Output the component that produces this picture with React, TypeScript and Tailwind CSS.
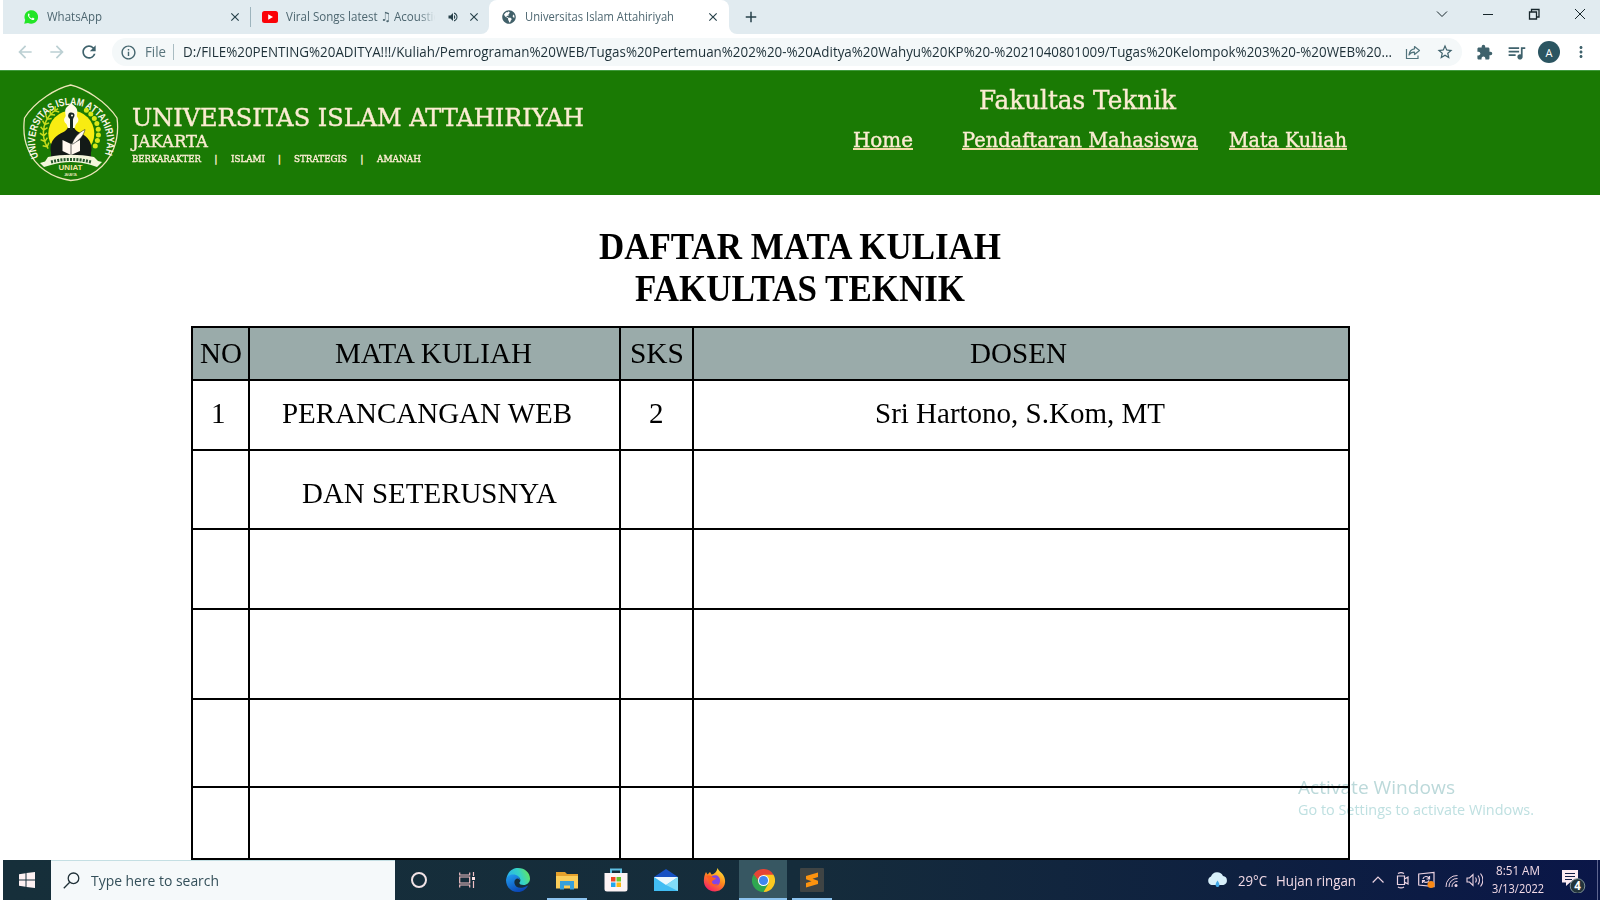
import { useLayoutEffect, useRef, useState, type ReactNode } from "react";
import { FaGlobeAmericas } from "react-icons/fa";
import {
  MdArrowBack,
  MdArrowForward,
  MdRefresh,
  MdInfoOutline,
  MdStarBorder,
  MdExtension,
  MdQueueMusic,
  MdMoreVert,
  MdVolumeUp,
  MdClose,
  MdAdd,
} from "react-icons/md";

/** One line of text squeezed or stretched to a given width. */
function Fit({ w, className = "", children }: { w: number; className?: string; children: ReactNode }) {
  const ref = useRef<HTMLSpanElement>(null);
  const [scale, setScale] = useState(1);
  useLayoutEffect(() => {
    const el = ref.current;
    if (el && el.offsetWidth) {
      const range = document.createRange();
      range.selectNodeContents(el);
      el.style.transform = "none";
      const natural = range.getBoundingClientRect().width;
      el.style.transform = `scaleX(${w / natural})`;
      setScale(w / natural);
    }
  }, [w]);
  return (
    <span className={`block shrink-0 whitespace-nowrap ${className}`} style={{ width: w }}>
      <span ref={ref} className="inline-block origin-left align-top" style={{ transform: `scaleX(${scale})` }}>
        {children}
      </span>
    </span>
  );
}

function TabBar() {
  return (
    <div className="ml-[3px] flex h-[34px] items-center bg-[#e1ebf0] text-[12.5px] leading-[34px] text-[#4d6670]">
      <svg className="ml-[21px] size-[14px] shrink-0" viewBox="0 0 14 14">
        <path d="M0.2 13.8 1.2 10A6.8 6.8 0 1 1 4 12.9z" fill="#22e526" />
        <path d="M4.6 3.6c-.8.5-.9 1.6-.3 2.8a8 8 0 0 0 3.5 3.4c1.100.5 2.200.3 2.500-.6l.1-.8-1.700-.8-.8.9c-1.400-.6-2.300-1.500-2.900-2.800l.7-.8-.6-1.500z" fill="#fff" />
      </svg>
      <Fit w={55} className="ml-[9px]">WhatsApp</Fit>
      <MdClose className="ml-[126px] size-[14px] shrink-0 text-[#27414a]" />
      <div className="ml-[8px] h-[20px] w-px shrink-0 bg-[#9db4bd]" />
      <svg className="ml-[11px] h-[12px] w-[16px] shrink-0" viewBox="0 0 16 12">
        <rect width="16" height="12" rx="2.500" fill="#fb0207" />
        <path d="M6.200 3.200v5.600l4.800-2.800z" fill="#fff" />
      </svg>
      <div className="ml-[8px] w-[154px] shrink-0 [mask-image:linear-gradient(to_right,black_86%,transparent_97%)]">
        <Fit w={153}>Viral Songs latest ♫ Acoustic</Fit>
      </div>
      <MdVolumeUp className="ml-[7px] size-[12px] shrink-0 text-[#27414a]" />
      <MdClose className="ml-[8px] size-[14px] shrink-0 text-[#27414a]" />
      <div className="h-[34px] w-[8px] shrink-0 bg-white">
        <div className="h-full w-[8px] rounded-br-[8px] bg-[#e1ebf0]" />
      </div>
      <div className="h-[34px] w-[240px] shrink-0 bg-[#e1ebf0]">
        <div className="flex h-full w-full items-center rounded-t-[8px] bg-white">
          <FaGlobeAmericas className="ml-[13px] size-[14px] shrink-0 text-[#416069]" />
          <Fit w={149} className="ml-[9px]">Universitas Islam Attahiriyah</Fit>
          <MdClose className="ml-[32px] size-[14px] shrink-0 text-[#27414a]" />
        </div>
      </div>
      <div className="h-[34px] w-[8px] shrink-0 bg-white">
        <div className="h-full w-[8px] rounded-bl-[8px] bg-[#e1ebf0]" />
      </div>
      <MdAdd className="ml-[5px] size-[18px] shrink-0 text-[#27414a]" />
      <svg className="ml-auto mr-[15px] h-[14px] w-[149px] shrink-0 -translate-y-[3px]" viewBox="0 0 149 14" fill="none" stroke="#17262b">
        <path d="M1 4.500 6 9.500 11 4.500" />
        <path d="M47 7.500h10" />
        <path d="M93.500 5h7v7h-7zM95.500 5V2.500h7.500V10h-2.500" strokeWidth="1.300" />
        <path d="M139 2l10 10M149 2l-10 10" />
      </svg>
    </div>
  );
}

function AddressBar() {
  return (
    <div className="flex h-[36px] items-center bg-white text-[14px] leading-[34px]">
      <MdArrowBack className="ml-[15px] size-[20px] shrink-0 text-[#bcd0d3]" />
      <MdArrowForward className="ml-[12px] size-[20px] shrink-0 text-[#bcd0d3]" />
      <MdRefresh className="ml-[12px] size-[20px] shrink-0 text-[#3f626c]" />
      <div className="ml-[13px] flex h-[28px] w-[1350px] shrink-0 items-center rounded-full bg-[#f4f8f9]">
        <MdInfoOutline className="ml-[8px] size-[17px] shrink-0 text-[#45666f]" />
        <Fit w={21} className="ml-[8px] text-[#58747c]">File</Fit>
        <div className="ml-[7px] h-[16px] w-px bg-[#a9bcc2]" />
        <Fit w={1209} className="ml-[9px] text-[#1d3038]">
          D:/FILE%20PENTING%20ADITYA!!!/Kuliah/Pemrograman%20WEB/Tugas%20Pertemuan%202%20-%20Aditya%20Wahyu%20KP%20-%2021040801009/Tugas%20Kelompok%203%20-%20WEB%20...
        </Fit>
        <svg className="ml-[13px] size-[16px] shrink-0" viewBox="0 0 16 16" fill="none" stroke="#52747c" strokeWidth="1.200">
          <path d="M1.500 5v9.500h11.500v-3" />
          <path d="M9.500 2.500 14.500 6.500 9.500 10.500V8.200C7 8 5.200 9 4 11 4.300 7.500 6.200 5.200 9.500 4.800z" strokeLinejoin="round" />
        </svg>
        <MdStarBorder className="ml-[15px] size-[18px] shrink-0 text-[#3f626c]" />
      </div>
      <MdExtension className="ml-[14px] size-[17px] shrink-0 text-[#3f626c]" />
      <MdQueueMusic className="ml-[13px] size-[21px] shrink-0 text-[#3f626c]" />
      <div className="ml-[11px] flex size-[22px] shrink-0 items-center justify-center rounded-full bg-[#2b5561] text-[11px] leading-none text-white">A</div>
      <MdMoreVert className="ml-[12px] size-[18px] shrink-0 text-[#3f626c]" />
    </div>
  );
}

function Crest() {
  const leaves = [0, 1, 2, 3, 4, 5, 6, 7];
  return (
    <svg className="h-[98px] w-[96px] shrink-0" viewBox="0 0 96 98">
      <defs>
        <path id="crest-arc" d="M16 74A36 36.500 0 1 1 81 72" />
      </defs>
      <path
        d="M47.700 1C34 4 12 17 1.500 34 0 46 1 56 5 65c7 18 24 29 42.700 31.500C67 95 83 83 90.500 65c4-10 5-20 3.500-31C83 17 61 4 47.700 1z"
        fill="none"
        stroke="#ece6b8"
        strokeWidth="1.300"
      />
      <text fontSize="10.500" fontWeight="700" fill="#fbf6e4" className="font-['Liberation_Sans',sans-serif]">
        <textPath href="#crest-arc" startOffset="1" textLength="143" lengthAdjust="spacingAndGlyphs">
          UNIVERSITAS ISLAM ATTAHIRIYAH
        </textPath>
      </text>
      {leaves.map((i) => {
        const deg = 152 + i * 12;
        const a = (deg * Math.PI) / 180;
        return (
          <g
            key={i}
            transform={`translate(${48 + 27.500 * Math.cos(a)} ${49 + 27.500 * Math.sin(a)}) rotate(${deg + 90})`}
            stroke="#c9dc1c"
            strokeWidth="1.500"
            fill="none"
          >
            <path d="M-3 0h6M-1 0l3-3.500M-1 0l3 3.500" />
          </g>
        );
      })}
      {leaves.map((i) => {
        const a = ((28 - i * 12) * Math.PI) / 180;
        return <circle key={i} cx={48 + 27.500 * Math.cos(a)} cy={49 + 27.500 * Math.sin(a)} r="2.500" fill="#d9e817" />;
      })}
      <circle cx="48.300" cy="49.500" r="23" fill="#f8ec12" />
      <path d="M26.500 75c2-3 2-5 1-9-.5-10 6-15 13-18 4-2 5-5 5.500-10h4c.5 5 1.500 8 5.500 10 7 3 13.500 8 13 18-1 4-1 6 1 9z" fill="#131a17" />
      <path d="M48.300 18.500c1.500 3.500 6.500 4 6 9.500 0 2.500-1 3.500 0 5 2 2.500 1 5-.8 6.500-1.500 1.500-1 3-2 4.500h-6.500c-1-1.500-.5-3-2-4.500-1.800-1.500-2.800-4-.8-6.500 1-1.500 0-2.500 0-5-.5-5.500 4.600-6 6.100-9.500z" fill="#fffbe9" />
      <path d="M45.500 30c1-2 5.500-2 6 .8.300 2.200-1.500 3-1.500 5V46h-3V35c-1.500-1-2.500-3-1.500-5z" fill="#172522" />
      <circle cx="49" cy="31.500" r="1" fill="#fffbe9" />
      <path d="M39.500 56l8.500 4 9-4v11l-9 4-8.500-4z" fill="#fff8ef" />
      <path d="M48 60v11" stroke="#333" strokeWidth=".8" />
      <path d="M49 60c2-6 6-11 13-14.500-1 6-6 11-12 14.500z" fill="#fff8ef" stroke="#131a17" strokeWidth=".5" />
      <path d="M17 79l5-1.500L25 73c15-3 31-3 46 0l4 4 4 1-5 5-6-2c-13-4-27-4-40 0l-7 2z" fill="#f4f6dc" />
      <path d="M28 78c13-3.500 27-3.500 40 0" stroke="#24552b" strokeWidth="3" strokeDasharray="2 1.200" fill="none" />
      <text x="35.500" y="86" fontSize="8" textLength="24" fontWeight="700" fill="#f6e6a4" className="font-['Liberation_Sans',sans-serif]">UNIAT</text>
      <text x="41" y="92" fontSize="3.600" textLength="13" fill="#f6eccb" className="font-['Liberation_Sans',sans-serif]">JAKARTA</text>
    </svg>
  );
}

function SiteHeader() {
  return (
    <header className="flex h-[125px] border-t border-[#3f9a3d] bg-[#1a7a04] font-['DejaVu_Serif',serif] text-[#fbecd2] [-webkit-text-stroke:0.4px_#fbecd2]">
      <div className="ml-[23px] mt-[13px] [-webkit-text-stroke:0]">
        <Crest />
      </div>
      <div className="ml-[13px] w-[721px] shrink-0 pt-[32px]">
        <Fit w={452} className="text-[25px] leading-[30px]">UNIVERSITAS ISLAM ATTAHIRIYAH</Fit>
        <Fit w={76} className="text-[16.500px] leading-[18px]">JAKARTA</Fit>
        <div className="flex text-[9.700px] leading-[16px]">
          <Fit w={69}>BERKARAKTER</Fit>
          <span className="w-[30px] text-center">|</span>
          <Fit w={34}>ISLAMI</Fit>
          <span className="w-[29px] text-center">|</span>
          <Fit w={53}>STRATEGIS</Fit>
          <span className="w-[30px] text-center">|</span>
          <Fit w={44}>AMANAH</Fit>
        </div>
      </div>
      <div className="shrink-0 pt-[13px]">
        <Fit w={197} className="ml-[126px] text-[25.500px] leading-[32px]">Fakultas Teknik</Fit>
        <nav className="flex pt-[11px] text-[20px] leading-[26px]">
          <a>
            <Fit w={60} className="h-[23px] border-b-2 border-[#f3dca8]">Home</Fit>
          </a>
          <a className="ml-[49px]">
            <Fit w={236} className="h-[23px] border-b-2 border-[#f3dca8]">Pendaftaran Mahasiswa</Fit>
          </a>
          <a className="ml-[31px]">
            <Fit w={118} className="h-[23px] border-b-2 border-[#f3dca8]">Mata Kuliah</Fit>
          </a>
        </nav>
      </div>
    </header>
  );
}

function Course() {
  const cell = "flex items-center border-b-2 border-r-2 border-black";
  return (
    <main className="relative h-[665px] bg-white font-['Liberation_Serif',serif] text-black">
      <div className="absolute left-[1298px] top-[579px] font-['Open_Sans',sans-serif] text-[#bcd9da]">
        <Fit w={157} className="text-[19px] leading-[26px]">Activate Windows</Fit>
        <Fit w={236} className="text-[14.500px] leading-[20px] text-[#bfe0e1]">Go to Settings to activate Windows.</Fit>
      </div>
      <h1 className="pt-[31px] text-[37px] font-bold leading-[42px]">
        <Fit w={402} className="ml-[599px]">DAFTAR MATA KULIAH</Fit>
        <Fit w={330} className="ml-[635px]">FAKULTAS TEKNIK</Fit>
      </h1>
      <div className="relative ml-[191px] mt-[16px] grid w-[1159px] grid-cols-[57px_371px_73px_656px] grid-rows-[53px_70px_79px_80px_90px_88px_72px] border-l-2 border-t-2 border-black text-[29.500px] leading-[32px]">
        <div className={`${cell} bg-[#9aabaa] pb-[1px]`}><Fit w={42} className="ml-[7px]">NO</Fit></div>
        <div className={`${cell} bg-[#9aabaa] pb-[1px]`}><Fit w={197} className="ml-[85px]">MATA KULIAH</Fit></div>
        <div className={`${cell} bg-[#9aabaa] pb-[1px]`}><Fit w={54} className="ml-[9px]">SKS</Fit></div>
        <div className={`${cell} bg-[#9aabaa] pb-[1px]`}><Fit w={97} className="ml-[276px]">DOSEN</Fit></div>
        <div className={`${cell} pb-[4px]`}><Fit w={14.500} className="ml-[18px]">1</Fit></div>
        <div className={`${cell} pb-[4px]`}><Fit w={290} className="ml-[32px]">PERANCANGAN WEB</Fit></div>
        <div className={`${cell} pb-[4px]`}><Fit w={14.500} className="ml-[28px]">2</Fit></div>
        <div className={`${cell} pb-[4px]`}><Fit w={290} className="ml-[181px]">Sri Hartono, S.Kom, MT</Fit></div>
        <div className={cell} />
        <div className={`${cell} pt-[7px]`}><Fit w={255} className="ml-[52px]">DAN SETERUSNYA</Fit></div>
        {Array.from({ length: 18 }, (_, i) => (
          <div key={i} className={cell} />
        ))}
      </div>
    </main>
  );
}

function EdgeIcon() {
  return (
    <svg className="size-[24px]" viewBox="0 0 24 24">
      <defs>
        <linearGradient id="edge-a" x1="0" y1="0.300" x2="1" y2="0">
          <stop offset="0" stopColor="#2ab4ea" />
          <stop offset=".5" stopColor="#35d2c6" />
          <stop offset="1" stopColor="#70ea45" />
        </linearGradient>
        <linearGradient id="edge-b" x1="0" y1="0" x2="0.600" y2="1">
          <stop offset="0" stopColor="#22a2f2" />
          <stop offset="1" stopColor="#0a45b5" />
        </linearGradient>
      </defs>
      <path d="M.5 10C2 3 7 0 12 0c7 0 12 5 12 10.500 0 4-3 6.500-6.500 6.500-3 0-4.500-1-4-2.500 1.500-2 1-4-1-5.500C9 7 3.500 7.500.5 10z" fill="url(#edge-a)" />
      <path d="M0 12c0-3 3-5.500 7-5.500 4.500 0 7 2.500 7 5.500l-2-1.500c-3 0-4 2.500-3.500 5C9.500 20 15 21.500 22 17.500 20 21.500 16.500 24 12 24 5 24 0 19 0 12z" fill="url(#edge-b)" />
    </svg>
  );
}

function ExplorerIcon() {
  return (
    <svg className="h-[19px] w-[22px]" viewBox="0 0 22 19">
      <path d="M0 1h9l2 2h11v14H0z" fill="#e5a12c" />
      <path d="M0 5h22v12.500H0z" fill="#fbce5a" />
      <path d="M4 18.500V10h14v8.500h-4v-4H8v4z" fill="#35a0dc" />
    </svg>
  );
}

function StoreIcon() {
  return (
    <svg className="h-[24px] w-[24px]" viewBox="0 0 24 24">
      <path d="M7 6V1.500h10V6" fill="none" stroke="#5fbfe2" strokeWidth="2" />
      <path d="M.5 5h23v16a2.500 2.500 0 0 1-2.500 2.500H3A2.500 2.500 0 0 1 .5 21z" fill="#fdf4f5" />
      <path d="M7 9h4.500v4.500H7z" fill="#ee4623" />
      <path d="M12.500 9H17v4.500h-4.500z" fill="#6bc72a" />
      <path d="M7 14.500h4.500V19H7z" fill="#22a7ec" />
      <path d="M12.500 14.500H17V19h-4.500z" fill="#fcb813" />
    </svg>
  );
}

function MailIcon() {
  return (
    <svg className="h-[23px] w-[24px]" viewBox="0 0 24 23">
      <path d="M0 8 12 0l12 8v4H0z" fill="#1551c3" />
      <path d="M0 8h24v14H0z" fill="#41bdf3" />
      <path d="M0 8h24L12 16z" fill="#ecf8fd" />
      <path d="M24 8v14L12 16z" fill="#82dcf8" />
    </svg>
  );
}

function FirefoxIcon() {
  return (
    <svg className="size-[24px]" viewBox="0 0 24 24">
      <defs>
        <linearGradient id="fox" x1="0.800" y1="0" x2="0.200" y2="1">
          <stop offset="0" stopColor="#ffe93b" />
          <stop offset=".45" stopColor="#ff8a1c" />
          <stop offset="1" stopColor="#f5156c" />
        </linearGradient>
      </defs>
      <path d="M14.500 0c1 3 3 3.500 5 6 5 6 3 17-7.500 17.500C4 23.500 0 17 1 11c0-3 1-5 2-7l1.500 2.500L7 4l1.500 2.500C12 6 14 3 14.500 0z" fill="url(#fox)" />
      <path d="M9 8c4-2 8 0 8 4.500S14 18 11.500 17.500 7 15 7.500 12.500l3-1L7.500 10z" fill="#8145e6" />
      <path d="M3 8c3-1 5-.5 7 1.500l3 .5c-.5 2-4 2-4 4 0 3 5 2.500 6 1.500-2 4-8 3-9-1C5.500 12 5 10 3 8z" fill="#ff5d22" />
    </svg>
  );
}

function ChromeIcon() {
  return (
    <svg className="size-[23px]" viewBox="0 0 48 48">
      <path d="M24 24 3.200 12A24 24 0 0 1 44.800 12z" fill="#e64435" />
      <path d="M24 24 44.800 12A24 24 0 0 1 24 48z" fill="#fbc820" />
      <path d="M24 24V48A24 24 0 0 1 3.200 12z" fill="#2ea750" />
      <path d="M24 12h20.800L34 28z" fill="#fbc820" />
      <path d="M34.400 30 24 48l-10-18z" fill="#2ea750" />
      <path d="M13.600 30 3.200 12 24 12z" fill="#e64435" />
      <path d="M13.600 30 3.200 12l.8-1 14 20z" fill="#2ea750" />
      <circle cx="24" cy="24" r="11.500" fill="#fff" />
      <circle cx="24" cy="24" r="9.500" fill="#3f86f0" />
    </svg>
  );
}

function SublimeIcon() {
  return (
    <svg className="size-[24px]" viewBox="0 0 24 24">
      <rect width="24" height="24" rx="1" fill="#3f4444" />
      <path d="M6 8 18 4.500V9l-5.500 1.700 5.500 2V16L6 19.500V15l5.500-1.700-5.500-2z" fill="#fd930f" />
    </svg>
  );
}

function Taskbar() {
  const slot = "flex h-full w-[48px] shrink-0 flex-col items-center";
  return (
    <footer className="ml-[3px] flex h-[40px] items-center bg-[linear-gradient(to_right,#162f3a_0%,#152c3b_50%,#0e2040_78%,#0a1648_100%)] text-[14px] leading-[40px] text-[#f3dbe7]">
      <div className="flex h-full w-[48px] shrink-0 items-center justify-center">
        <svg className="size-[16px]" viewBox="0 0 16 16" fill="#fdf1f2">
          <path d="M0 2.200 6.500 1.300v6.200H0zM7.500 1.100 16 0v7.500H7.500zM0 8.500h6.500v6.200L0 13.800zM7.500 8.500H16V16l-8.500-1.100z" />
        </svg>
      </div>
      <div className="flex h-full w-[344px] shrink-0 items-center border-t border-[#c4dfe3] bg-[#f5f9fa]">
        <svg className="ml-[12px] size-[17px]" viewBox="0 0 17 17" fill="none" stroke="#1f3037" strokeWidth="1.300">
          <circle cx="10.500" cy="6.300" r="5.300" />
          <path d="M6.700 10.200.8 16.200" />
        </svg>
        <Fit w={128} className="ml-[11px] text-[14.500px] text-[#34505a]">Type here to search</Fit>
      </div>
      <div className="ml-[16px] size-[16px] shrink-0 rounded-full border-2 border-[#f2e3e6]" />
      <svg className="ml-[32px] size-[16px] shrink-0" viewBox="0 0 16 16" fill="none" stroke="#f0bfc4" strokeWidth="1.200">
        <path d="M.7.5v2.500h10V.5M.7 15.500V13h10v2.500M.7 5h10v6H.7zM14.500 0v4M14.500 9v7" />
        <path d="M13 5h3v3h-3z" fill="#fbe0e3" stroke="none" />
      </svg>
      <div className="ml-[19px] flex h-full shrink-0">
        <div className={`${slot} justify-center`}><EdgeIcon /></div>
        <div className={`${slot} ml-[1px] justify-between pt-[11px]`}>
          <ExplorerIcon />
          <div className="h-[2px] w-[40px] bg-[#8cc3ef]" />
        </div>
        <div className={`${slot} ml-[1px] justify-center`}><StoreIcon /></div>
        <div className={`${slot} ml-[2px] justify-center`}><MailIcon /></div>
        <div className={`${slot} ml-[1px] justify-center`}><FirefoxIcon /></div>
        <div className={`${slot} justify-between bg-[#375762] pt-[9px]`}>
          <ChromeIcon />
          <div className="h-[2px] w-[48px] bg-[#8cc3ef]" />
        </div>
        <div className={`${slot} ml-[1px] justify-between pt-[8px]`}>
          <SublimeIcon />
          <div className="h-[2px] w-[40px] bg-[#8cc3ef]" />
        </div>
      </div>
      <svg className="ml-[371px] h-[16px] w-[21px] shrink-0" viewBox="0 0 21 16">
        <path d="M4.500 13A4.500 4.500 0 0 1 4 4.500 6.500 6.500 0 0 1 16 4a4.600 4.600 0 0 1 .5 9z" fill="#d8f0fa" />
        <path d="M10.500 8.500c-3 4-2 6.500 0 6.500s3-2.500 0-6.500z" fill="#41a8e8" />
      </svg>
      <Fit w={29} className="ml-[10px] h-[39px]">29°C</Fit>
      <Fit w={80} className="ml-[9px] h-[39px]">Hujan ringan</Fit>
      <svg className="ml-[16px] h-[20px] w-[111px] shrink-0" viewBox="0 0 111 20" fill="none" stroke="#ecd3e2" strokeWidth="1.200">
        <path d="M.7 12.500 6 7l5.500 5.500" />
        <path d="M25.500 6h7v8.500h-7zM32.500 9l3.500-2v7l-3.500-2M26 3.500c2-1.300 4-1.300 6 0M26 17c2 1.300 4 1.300 6 0" />
        <path d="M46.700 4 62 2.500v14L46.700 15z" />
        <path d="M51 9c.5-3 5-3.500 6-.5M57.500 6v3h-3M57 10.500c-1 2.500-5 2.500-6 0M50.500 13v-2.500h2.500" />
        <circle cx="59" cy="14.500" r="3.500" fill="#fb8a16" stroke="none" />
        <path d="M74 17A11 11 0 0 1 85.500 5.500M77 17a8 8 0 0 1 8.500-8.500M80 17a5 5 0 0 1 5.500-5.500" strokeWidth="1" />
        <circle cx="84" cy="15.500" r="1.500" fill="#ecd3e2" stroke="none" />
        <path d="M95 8h2.500L101 4.500v11L97.500 12H95zM103.500 7.500c1 1.500 1 3.500 0 5M106 5.500c2 2.500 2 6.500 0 9M108.500 3.500c3 4 3 9 0 13" strokeWidth="1.100" />
      </svg>
      <div className="ml-[9px] h-[38px] shrink-0 text-[13px] leading-[18px]">
        <Fit w={44} className="ml-[4px]">8:51 AM</Fit>
        <Fit w={52}>3/13/2022</Fit>
      </div>
      <svg className="ml-[18px] h-[26px] w-[25px] shrink-0" viewBox="0 0 25 26">
        <path d="M0 3h16v12.500H8L4 19v-3.500H0z" fill="#fbeaf2" />
        <path d="M3 6.500h10M3 9.500h10M3 12.500h7" stroke="#101d46" strokeWidth="1.200" />
        <circle cx="15.500" cy="19" r="7.300" fill="#23343b" stroke="#7e9198" />
        <text x="15.500" y="23" textAnchor="middle" fontSize="11.500" fontWeight="700" fill="#fff" className="font-['Open_Sans',sans-serif]">4</text>
      </svg>
      <div className="ml-auto mr-[2px] h-full w-px bg-[#5e6690]" />
    </footer>
  );
}

export default function App() {
  return (
    <div className="flex h-[900px] w-[1600px] flex-col overflow-hidden bg-white font-['Open_Sans','DejaVu_Sans',sans-serif]">
      <TabBar />
      <AddressBar />
      <SiteHeader />
      <Course />
      <Taskbar />
    </div>
  );
}
